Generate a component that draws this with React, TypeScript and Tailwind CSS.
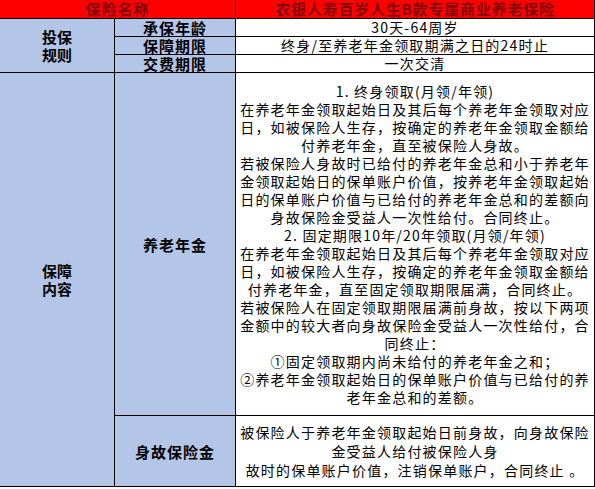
const pensionLines = [
  "1. 终身领取(月领/年领)",
  "在养老年金领取起始日及其后每个养老年金领取对应",
  "日，如被保险人生存，按确定的养老年金领取金额给",
  "付养老年金，直至被保险人身故。",
  "若被保险人身故时已给付的养老年金总和小于养老年",
  "金领取起始日的保单账户价值，按养老年金领取起始",
  "日的保单账户价值与已给付的养老年金总和的差额向",
  "身故保险金受益人一次性给付。合同终止。",
  "2. 固定期限10年/20年领取(月领/年领)",
  "在养老年金领取起始日及其后每个养老年金领取对应",
  "日，如被保险人生存，按确定的养老年金领取金额给",
  "付养老年金，直至固定领取期限届满，合同终止。",
  "若被保险人在固定领取期限届满前身故，按以下两项",
  "金额中的较大者向身故保险金受益人一次性给付，合",
  "同终止：",
  "①固定领取期内尚未给付的养老年金之和；",
  "②养老年金领取起始日的保单账户价值与已给付的养",
  "老年金总和的差额。",
]

const deathLines = [
  "被保险人于养老年金领取起始日前身故，向身故保险",
  "金受益人给付被保险人身",
  "故时的保单账户价值，注销保单账户，合同终止 。",
]

function Label({ children }: { children: React.ReactNode }) {
  return (
    <div className="bg-[#b4c6e7] flex items-center justify-center text-[15px] leading-[17px] font-bold tracking-[1px] text-black">
      {children}
    </div>
  )
}

function Value({ children }: { children: React.ReactNode }) {
  return (
    <div className="bg-white flex items-center justify-center text-[14px] leading-[17px] tracking-[1.2px] text-black whitespace-nowrap">
      {children}
    </div>
  )
}

export default function App() {
  return (
    <div className="w-[595px] h-[489px] bg-white font-['Noto_Sans_CJK_SC',sans-serif]">
      <div className="grid w-[595px] grid-cols-[114px_120px_358px] grid-rows-[18px_17px_17px_17px_342px_70px] gap-px bg-black pr-px pb-px">
        <div className="col-span-2 bg-[#ff0000] flex items-center justify-center text-[15px] leading-[18px] font-bold tracking-[1px] text-[#800000]">
          保险名称
        </div>
        <div className="bg-[#ff0000] flex items-center justify-center text-[15px] leading-[18px] font-bold tracking-[0.8px] text-[#800000] whitespace-nowrap">
          农银人寿百岁人生B款专属商业养老保险
        </div>

        <div className="row-span-3 bg-[#b4c6e7] flex flex-col items-center justify-center text-[15px] leading-[18px] font-bold text-black">
          <span>投保</span>
          <span>规则</span>
        </div>
        <Label>承保年龄</Label>
        <Value>30天-64周岁</Value>
        <Label>保障期限</Label>
        <Value>终身/至养老年金领取期满之日的24时止</Value>
        <Label>交费期限</Label>
        <Value>一次交清</Value>

        <div className="row-span-2 bg-[#b4c6e7] flex flex-col items-center justify-center text-[15px] leading-[18px] font-bold text-black">
          <span>保障</span>
          <span>内容</span>
        </div>
        <Label>养老年金</Label>
        <div className="bg-white flex flex-col items-center justify-center text-[14px] leading-[18px] tracking-[1.2px] text-black">
          {pensionLines.map((line) => (
            <p key={line} className="whitespace-nowrap text-center">
              {line}
            </p>
          ))}
        </div>

        <Label>身故保险金</Label>
        <div className="bg-white flex flex-col items-center justify-center text-[14px] leading-[19px] tracking-[1.2px] text-black">
          {deathLines.map((line) => (
            <p key={line} className="whitespace-nowrap text-center">
              {line}
            </p>
          ))}
        </div>
      </div>
    </div>
  )
}
